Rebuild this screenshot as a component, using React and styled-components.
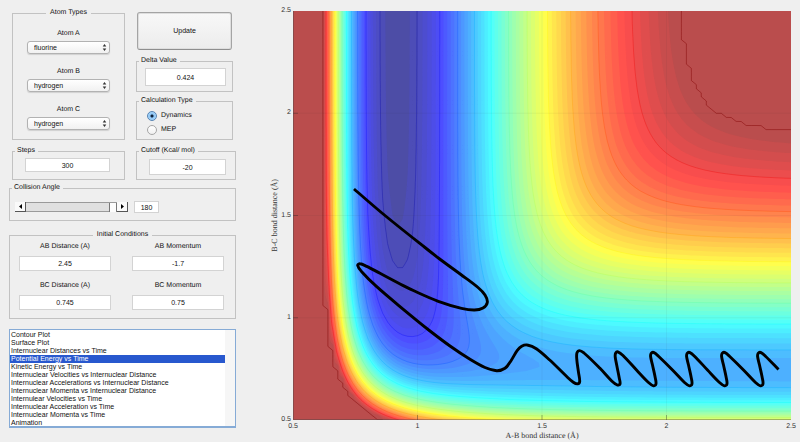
import React, { useState } from "react";
import styled, { createGlobalStyle } from "styled-components";

const GlobalStyle = createGlobalStyle`
  *, *::before, *::after { box-sizing: border-box; }
  body {
    margin: 0;
    background: #efefef;
    color: #111;
    font: 7px/10px "Liberation Sans", Arial, sans-serif;
    text-rendering: geometricPrecision;
  }
`;

/* ---------- Potential energy surface (collinear LEPS, F + H2) ---------- */

const SATO = 0.188;
const BONDS = {
  HF: { D: 141.2, beta: 2.2189, r0: 0.917 },
  HH: { D: 109.5, beta: 1.942, r0: 0.742 },
};
const CUTOFF = -22.5;
const V_MAX = -20;
const V_MIN = -141.2;
const MIN_R = 0.5;
const STEP = 0.02;
const CELLS = 100;
const PLOT_W = 498;
const PLOT_H = 409;

function integrals({ D, beta, r0 }, r) {
  const e = Math.exp(-beta * (r - r0));
  const c = D / (4 * (1 + SATO));
  return {
    q: c * ((3 + SATO) * e * e - (2 + 6 * SATO) * e),
    j: c * ((1 + 3 * SATO) * e * e - (6 + 2 * SATO) * e),
  };
}

function potential(ab, bc) {
  const a = integrals(BONDS.HF, ab);
  const b = integrals(BONDS.HH, bc);
  const c = integrals(BONDS.HF, ab + bc);
  const root = Math.sqrt(
    0.5 * ((a.j - b.j) ** 2 + (b.j - c.j) ** 2 + (c.j - a.j) ** 2)
  );
  return Math.min(CUTOFF, a.q + b.q + c.q - root);
}

const FIELD = Array.from({ length: CELLS + 1 }, (_, row) =>
  Array.from({ length: CELLS + 1 }, (_, col) =>
    potential(MIN_R + col * STEP, MIN_R + row * STEP)
  )
);

const toX = (col) => (col / CELLS) * PLOT_W;
const toY = (row) => PLOT_H - (row / CELLS) * PLOT_H;
const fmt = (n) => n.toFixed(1);

function clipCell(row, col, level) {
  const corners = [
    [col, row],
    [col + 1, row],
    [col + 1, row + 1],
    [col, row + 1],
  ].map(([c, r]) => [c, r, FIELD[r][c]]);
  const shape = [];
  const cuts = [];
  corners.forEach((p, i) => {
    const n = corners[(i + 1) % 4];
    const inside = p[2] >= level;
    if (inside) shape.push([p[0], p[1]]);
    if (inside !== n[2] >= level) {
      const t = (level - p[2]) / (n[2] - p[2]);
      const cut = [p[0] + t * (n[0] - p[0]), p[1] + t * (n[1] - p[1])];
      shape.push(cut);
      cuts.push(cut);
    }
  });
  return { shape, cuts };
}

const toPath = (pts) =>
  "M" + pts.map(([c, r]) => `${fmt(toX(c))} ${fmt(toY(r))}`).join("L");

function regionAbove(level) {
  let d = "";
  for (let row = 0; row < CELLS; row++) {
    let start = -1;
    for (let col = 0; col <= CELLS; col++) {
      const full =
        col < CELLS &&
        FIELD[row][col] >= level &&
        FIELD[row][col + 1] >= level &&
        FIELD[row + 1][col] >= level &&
        FIELD[row + 1][col + 1] >= level;
      if (full) {
        if (start < 0) start = col;
        continue;
      }
      if (start >= 0) {
        d += toPath([[start, row], [col, row], [col, row + 1], [start, row + 1]]) + "Z";
        start = -1;
      }
      if (col < CELLS) {
        const { shape } = clipCell(row, col, level);
        if (shape.length > 2) d += toPath(shape) + "Z";
      }
    }
  }
  return d;
}

function isoline(level) {
  let d = "";
  for (let row = 0; row < CELLS; row++) {
    for (let col = 0; col < CELLS; col++) {
      const { cuts } = clipCell(row, col, level);
      if (cuts.length >= 2) d += toPath(cuts.slice(0, 2));
    }
  }
  return d;
}

function jet(level, fade) {
  const t = Math.min(1, Math.max(0, (level - V_MIN) / (V_MAX - V_MIN)));
  const channel = (centre) => {
    const v = Math.min(1, Math.max(0, 1.5 - Math.abs(4 * t - centre)));
    return Math.round(255 * (v * (1 - fade) + fade));
  };
  return `rgb(${channel(3)}, ${channel(2)}, ${channel(1)})`;
}

const BAND = 2.088;
const BANDS = Array.from({ length: 56 }, (_, k) => {
  const level = -139.4 + k * BAND;
  return { d: regionAbove(level), fill: jet(level + BAND / 2, 0.3) };
});
const LINES = Array.from({ length: 11 }, (_, k) => {
  const level = -137.3 + k * BAND * 5;
  return { d: isoline(level), stroke: jet(level, 0) };
});
const CUTOFF_LINE = isoline(CUTOFF - 0.001);

/* ---------- Trajectory ---------- */

const APPROACH = [
  [61, 178], [92, 204.5], [132, 236.5], [146, 247.5], [168.5, 264], [185, 276.5],
  [192, 284], [194.3, 291.5], [190, 297], [181.5, 299], [168.5, 297.3], [145.3, 290.3],
  [122, 280.3], [110.3, 274.6], [87, 262.3], [73.7, 255.4], [67, 252.8], [64.7, 254.5],
  [68.7, 260.7], [83.7, 275.7], [110.3, 298.3], [137, 320], [157, 335], [177, 348.3],
  [192, 356.5], [203.7, 359.7], [212, 357.3], [218, 349.7], [224.3, 339.4],
  [228.7, 335.2], [234.3, 334], [243.7, 338], [257, 349.3], [273.7, 365.5],
  [280.3, 371.2], [284.7, 372.8], [286.7, 370.5], [285.4, 360.7], [283.7, 347.3],
  [284, 341.8], [286.5, 339.6], [291, 342], [307, 357.3], [318.7, 370], [324.3, 374],
  [327, 373], [326.3, 367.3], [323.7, 354], [322.2, 345.7], [322.7, 342],
  [324.8, 340.8], [330, 344.5],
];

const vibration = (x) => [
  [x - 17, 359], [x - 5, 371.5], [x, 374.8], [x + 2.4, 373.2], [x + 1.8, 367],
  [x - 1, 354], [x - 2.9, 345.5], [x - 2.3, 342.3], [x, 341.4], [x + 5, 345.2],
];

const TRAJECTORY = [
  ...APPROACH,
  ...[360.5, 396.5, 431.5, 467.5].flatMap(vibration),
  [485.5, 358.5],
];

function smooth(points) {
  let d = `M${points[0].join(" ")}`;
  for (let i = 0; i < points.length - 1; i++) {
    const p1 = points[i];
    const p2 = points[i + 1];
    const len = Math.hypot(p2[0] - p1[0], p2[1] - p1[1]);
    const tangent = (a, b) => {
      const n = Math.hypot(b[0] - a[0], b[1] - a[1]) || 1;
      return [((b[0] - a[0]) / n) * (len / 3), ((b[1] - a[1]) / n) * (len / 3)];
    };
    const t1 = tangent(points[i - 1] || p1, p2);
    const t2 = tangent(p1, points[i + 2] || p2);
    const c1 = [p1[0] + t1[0], p1[1] + t1[1]];
    const c2 = [p2[0] - t2[0], p2[1] - t2[1]];
    d += `C${c1.map(fmt).join(" ")} ${c2.map(fmt).join(" ")} ${p2.join(" ")}`;
  }
  return d;
}

const TRAJECTORY_PATH = smooth(TRAJECTORY);

/* ---------- Layout ---------- */

const Page = styled.main`
  display: grid;
  grid-template-columns: 227px minmax(0, 1fr);
  column-gap: 34px;
  align-items: start;
  padding: 8px 9px 7px;
`;

const Controls = styled.form`
  display: flex;
  flex-direction: column;
`;

const SetupRow = styled.div`
  display: grid;
  grid-template-columns: 113px minmax(0, 1fr);
  column-gap: 11px;
  padding: 0 3px;
`;

const LimitsRow = styled(SetupRow)`
  padding: 0 0 0 3px;
  margin: 6px 0 3px;
`;

const SideColumn = styled.div`
  display: flex;
  flex-direction: column;
  gap: 4px;
`;

const Group = styled.fieldset`
  min-width: 0;
  margin: 0;
  padding: 0;
  border: 1px solid #c2c2c2;
`;

const ConditionsGroup = styled(Group)`
  margin-top: 9px;
`;

const GroupBody = styled.div`
  padding: ${(p) => p.$pad};
`;

const Legend = styled.legend`
  height: 10px;
  padding: 0 ${(p) => (p.$centered ? 4 : 3)}px 0 ${(p) => (p.$centered ? 4 : 2)}px;
  margin: ${(p) => (p.$centered ? "0 auto" : "0 0 0 2px")};
`;

const UpdateButton = styled.button`
  height: 38px;
  margin: 4px 1px 2px;
  padding: 0;
  border: 1px solid #a4a4a4;
  border-bottom-color: #8e8e8e;
  border-radius: 3px;
  background: linear-gradient(#f8f8f8, #ececec);
  box-shadow: inset 0 0 0 1px #dedede;
  color: inherit;
  font: inherit;
`;

const AtomList = styled.div`
  display: flex;
  flex-direction: column;
  gap: 13px;
`;

const Field = styled.label`
  display: flex;
  flex-direction: column;
  align-items: center;
  gap: ${(p) => p.$gap || 2}px;
`;

const SelectBox = styled.span`
  display: grid;
  width: 100%;
  align-items: center;
`;

const Select = styled.select`
  grid-area: 1 / 1;
  width: 100%;
  height: 13px;
  padding: 0 6px;
  appearance: none;
  border: 1px solid #b2b2b2;
  border-radius: 3px;
  background: linear-gradient(#ffffff, #f1f1f1);
  box-shadow: 0 1px 1px #d0d0d0;
  color: inherit;
  font: inherit;
`;

const Arrows = styled.svg`
  grid-area: 1 / 1;
  justify-self: end;
  width: 5px;
  height: 7px;
  margin-right: 3px;
  pointer-events: none;
`;

const TextInput = styled.input`
  width: ${(p) => p.$width || "100%"};
  height: ${(p) => p.$height}px;
  padding: 0;
  border: 1px solid #d3d3d3;
  background: #fff;
  color: inherit;
  font: inherit;
  text-align: center;
`;

const RadioRow = styled.label`
  display: flex;
  align-items: center;
  gap: 4px;
  height: 14px;
`;

const Radio = styled.input`
  width: 10px;
  height: 10px;
  margin: 0;
  appearance: none;
  border: 1px solid #a6a6a6;
  border-radius: 50%;
  background: linear-gradient(#ffffff, #f0f0f0);
  &:checked {
    border-color: #5784b4;
    background: radial-gradient(circle, #10243c 0 1px, #8cc4f4 2px, #b4e0ff 5px);
  }
`;

const AngleRow = styled.div`
  display: flex;
  align-items: center;
  gap: 6px;
`;

const SliderBar = styled.div`
  display: flex;
  width: 113px;
  height: 10px;
`;

const StepButton = styled.button`
  display: grid;
  place-items: center;
  flex: 0 0 11px;
  padding: 0;
  border: solid #555;
  border-width: 0 1px 1px 0;
  background: #fafafa;
`;

const StepIcon = styled.svg`
  width: 3px;
  height: 5px;
`;

const Slider = styled.input`
  flex: 1;
  min-width: 0;
  height: 10px;
  margin: 0;
  appearance: none;
  border: solid #9a9a9a;
  border-width: 1px 0;
  background: #e0e0e0;
  &::-webkit-slider-thumb {
    appearance: none;
    width: 8px;
    height: 9px;
    border: solid #777;
    border-width: 0 1px 0 1px;
    background: #fcfcfc;
  }
`;

const Conditions = styled.div`
  display: grid;
  grid-template-columns: 1fr 1fr;
  gap: 10px 21px;
`;

const ListFrame = styled.div`
  display: flex;
  margin-top: 10px;
  border: 1px solid #86abd6;
  border-bottom-width: 2px;
  background: #f6f6f6;
`;

const ListBox = styled.select`
  flex: 1;
  min-width: 0;
  height: 96px;
  margin-right: 10px;
  padding: 1px 0 0;
  overflow: hidden;
  border: 0;
  border-radius: 0;
  outline: 0;
  background: #fff;
  color: inherit;
  font: inherit;
`;

const ListItem = styled.option`
  min-height: 0;
  height: 8px;
  padding: 0 1px;
  font-size: 7px;
  line-height: 8px;
  &:checked {
    background: linear-gradient(#2858ce, #2858ce);
    -webkit-text-fill-color: #fff;
  }
`;

const Figure = styled.figure`
  display: grid;
  grid-template-columns: 10px 13px minmax(0, 1fr);
  grid-template-rows: auto 12px 8px;
  margin: 3px 0 0;
  font-size: 8px;
`;

const YLabel = styled.div`
  place-self: center;
  writing-mode: vertical-rl;
  transform: rotate(180deg);
  color: #333;
  font-family: "Liberation Serif", serif;
  white-space: nowrap;
`;

const XLabel = styled.figcaption`
  grid-column: 3;
  justify-self: center;
  color: #333;
  line-height: 8px;
  font-family: "Liberation Serif", serif;
`;

const YTicks = styled.div`
  display: flex;
  flex-direction: column;
  justify-content: space-between;
  align-items: flex-end;
  margin: -5px 2px -5px 0;
  color: #333;
  font-size: 7px;
`;

const XTicks = styled.div`
  grid-column: 3;
  display: flex;
  justify-content: space-between;
  margin: 2px -8px 0;
  color: #333;
  font-size: 7px;
`;

const XTick = styled.span`
  width: 16px;
  text-align: center;
`;

const Plot = styled.svg`
  display: block;
  width: 100%;
  aspect-ratio: 498 / 409;
`;

/* ---------- Parts ---------- */

const ATOMS = ["fluorine", "hydrogen", "chlorine", "deuterium"];
const TICKS = ["0.5", "1", "1.5", "2", "2.5"];
const PLOTS = [
  "Contour Plot",
  "Surface Plot",
  "Internuclear Distances vs Time",
  "Potential Energy vs Time",
  "Kinetic Energy vs Time",
  "Internuclear Velocities vs Internuclear Distance",
  "Internuclear Accelerations vs Internuclear Distance",
  "Internuclear Momenta vs Internuclear Distance",
  "Internulear Velocities vs Time",
  "Internuclear Acceleration vs Time",
  "Internuclear Momenta vs Time",
  "Animation",
];

function AtomSelect({ label, value }) {
  return (
    <Field>
      {label}
      <SelectBox>
        <Select defaultValue={value}>
          {ATOMS.map((a) => (
            <option key={a}>{a}</option>
          ))}
        </Select>
        <Arrows viewBox="0 0 5 7" aria-hidden="true">
          <path d="M2.5 0L4.3 2.5H0.7ZM2.5 7L4.3 4.5H0.7Z" fill="#333" />
        </Arrows>
      </SelectBox>
    </Field>
  );
}

function Condition({ label, value }) {
  return (
    <Field $gap={4}>
      {label}
      <TextInput $height={15} defaultValue={value} />
    </Field>
  );
}

function ContourPlot() {
  return (
    <Plot
      viewBox={`0 0 ${PLOT_W} ${PLOT_H}`}
      preserveAspectRatio="none"
      role="img"
      aria-label="Potential energy contour plot with trajectory"
    >
      <rect width={PLOT_W} height={PLOT_H} fill={jet(V_MIN, 0.3)} />
      {BANDS.map((b, i) => (
        <path key={i} d={b.d} fill={b.fill} />
      ))}
      <g fill="none" strokeWidth="1" strokeOpacity="0.3">
        {LINES.map((l, i) => (
          <path key={i} d={l.d} stroke={l.stroke} />
        ))}
        <path d={CUTOFF_LINE} stroke="#800000" strokeOpacity="0.45" />
      </g>
      {[1, 2, 3].map((i) => {
        const x = (i / 4) * PLOT_W;
        const y = (i / 4) * PLOT_H;
        return (
          <g key={i} stroke="#222" strokeWidth="1">
            <path d={`M${x} 0V${PLOT_H}M0 ${y}H${PLOT_W}`} strokeOpacity="0.05" />
            <path d={`M${x} ${PLOT_H}v-5M0 ${y}h5`} strokeOpacity="0.35" />
          </g>
        );
      })}
      <path d={`M0.5 0V${PLOT_H - 0.5}H${PLOT_W}`} fill="none" stroke="#444" strokeOpacity="0.4" />
      <path
        d={TRAJECTORY_PATH}
        fill="none"
        stroke="#000"
        strokeWidth="2.9"
        strokeLinejoin="round"
      />
    </Plot>
  );
}

export default function App() {
  const [angle, setAngle] = useState(180);
  const nudge = (by) => setAngle((a) => Math.min(180, Math.max(0, a + by)));

  return (
    <>
      <GlobalStyle />
      <Page>
        <Controls onSubmit={(e) => e.preventDefault()}>
          <SetupRow>
            <Group>
              <Legend $centered>Atom Types</Legend>
              <GroupBody $pad="11px 14px 8px">
                <AtomList>
                  <AtomSelect label="Atom A" value="fluorine" />
                  <AtomSelect label="Atom B" value="hydrogen" />
                  <AtomSelect label="Atom C" value="hydrogen" />
                </AtomList>
              </GroupBody>
            </Group>
            <SideColumn>
              <UpdateButton type="submit">Update</UpdateButton>
              <Group>
                <Legend>Delta Value</Legend>
                <GroupBody $pad="2px 6px 5px 8px">
                  <TextInput $height={18} defaultValue="0.424" aria-label="Delta Value" />
                </GroupBody>
              </Group>
              <Group>
                <Legend>Calculation Type</Legend>
                <GroupBody $pad="3px 8px 2px 10px">
                  <RadioRow>
                    <Radio type="radio" name="calculation" defaultChecked />
                    Dynamics
                  </RadioRow>
                  <RadioRow>
                    <Radio type="radio" name="calculation" />
                    MEP
                  </RadioRow>
                </GroupBody>
              </Group>
            </SideColumn>
          </SetupRow>

          <LimitsRow>
            <Group>
              <Legend>Steps</Legend>
              <GroupBody $pad="2px 14px 7px 12px">
                <TextInput $height={14} defaultValue="300" aria-label="Steps" />
              </GroupBody>
            </Group>
            <Group>
              <Legend>Cutoff (Kcal/ mol)</Legend>
              <GroupBody $pad="3px 9px 4px 12px">
                <TextInput $height={16} defaultValue="-20" aria-label="Cutoff (Kcal/ mol)" />
              </GroupBody>
            </Group>
          </LimitsRow>

          <Group>
            <Legend>Collision Angle</Legend>
            <GroupBody $pad="8px 5px 7px">
              <AngleRow>
                <SliderBar>
                  <StepButton type="button" aria-label="Decrease angle" onClick={() => nudge(-1)}>
                    <StepIcon viewBox="0 0 3 5">
                      <path d="M3 0V5L0 2.5Z" />
                    </StepIcon>
                  </StepButton>
                  <Slider
                    type="range"
                    min="0"
                    max="180"
                    value={angle}
                    aria-label="Collision Angle"
                    onChange={(e) => setAngle(Number(e.target.value))}
                  />
                  <StepButton type="button" aria-label="Increase angle" onClick={() => nudge(1)}>
                    <StepIcon viewBox="0 0 3 5">
                      <path d="M0 0V5L3 2.5Z" />
                    </StepIcon>
                  </StepButton>
                </SliderBar>
                <TextInput
                  $width="25px"
                  $height={12}
                  value={angle}
                  aria-label="Collision Angle value"
                  onChange={(e) => setAngle(Number(e.target.value) || 0)}
                />
              </AngleRow>
            </GroupBody>
          </Group>

          <ConditionsGroup>
            <Legend $centered>Initial Conditions</Legend>
            <GroupBody $pad="2px 11px 8px 9px">
              <Conditions>
                <Condition label="AB Distance (A)" value="2.45" />
                <Condition label="AB Momentum" value="-1.7" />
                <Condition label="BC Distance (A)" value="0.745" />
                <Condition label="BC Momentum" value="0.75" />
              </Conditions>
            </GroupBody>
          </ConditionsGroup>

          <ListFrame>
            <ListBox size={12} defaultValue="Potential Energy vs Time" aria-label="Plot type">
              {PLOTS.map((p) => (
                <ListItem key={p}>{p}</ListItem>
              ))}
            </ListBox>
          </ListFrame>
        </Controls>

        <Figure>
          <YLabel>B-C bond distance (Å)</YLabel>
          <YTicks>
            {[...TICKS].reverse().map((t) => (
              <span key={t}>{t}</span>
            ))}
          </YTicks>
          <ContourPlot />
          <XTicks>
            {TICKS.map((t) => (
              <XTick key={t}>{t}</XTick>
            ))}
          </XTicks>
          <XLabel>A-B bond distance (Å)</XLabel>
        </Figure>
      </Page>
    </>
  );
}
